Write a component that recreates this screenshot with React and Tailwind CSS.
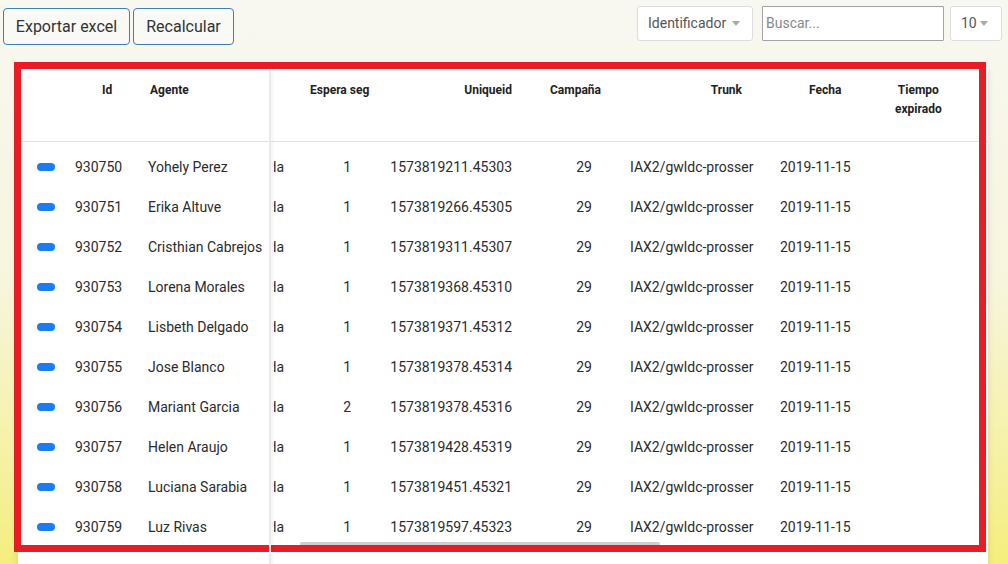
const rows = [
  { id: "930750", agente: "Yohely Perez", espera: 1, uniqueid: "1573819211.45303" },
  { id: "930751", agente: "Erika Altuve", espera: 1, uniqueid: "1573819266.45305" },
  { id: "930752", agente: "Cristhian Cabrejos", espera: 1, uniqueid: "1573819311.45307" },
  { id: "930753", agente: "Lorena Morales", espera: 1, uniqueid: "1573819368.45310" },
  { id: "930754", agente: "Lisbeth Delgado", espera: 1, uniqueid: "1573819371.45312" },
  { id: "930755", agente: "Jose Blanco", espera: 1, uniqueid: "1573819378.45314" },
  { id: "930756", agente: "Mariant Garcia", espera: 2, uniqueid: "1573819378.45316" },
  { id: "930757", agente: "Helen Araujo", espera: 1, uniqueid: "1573819428.45319" },
  { id: "930758", agente: "Luciana Sarabia", espera: 1, uniqueid: "1573819451.45321" },
  { id: "930759", agente: "Luz Rivas", espera: 1, uniqueid: "1573819597.45323" },
];

const Caret = () => (
  <span className="inline-block w-0 h-0 border-l-[4px] border-r-[4px] border-t-[5px] border-l-transparent border-r-transparent border-t-[#aaa]" />
);

const App = () => {
  return (
    <div
      className="relative w-[1008px] h-[564px] overflow-hidden bg-gradient-to-b from-[#f8f8f2] via-[#f7f5dc] to-[#f5ee7c]"
      style={{ fontFamily: "Roboto, 'Liberation Sans', sans-serif" }}
    >
      {/* toolbar */}
      <div className="flex justify-between items-start h-[62px]">
        <div className="flex gap-[3px] pl-[3px] pt-[8px]">
          <button className="h-[37px] w-[127px] border border-[#3f7fb4] rounded-[4px] bg-[#f9faf6] text-[16px] text-[#333]">
            Exportar excel
          </button>
          <button className="h-[37px] w-[101px] border border-[#3f7fb4] rounded-[4px] bg-[#f9faf6] text-[16px] text-[#333]">
            Recalcular
          </button>
        </div>
        <div className="flex items-center pt-[6px] pr-[6px]">
          <div className="h-[35px] w-[116px] flex items-center justify-between pl-[10px] pr-[12px] bg-white border border-[#ddd] rounded-[3px] text-[14px] text-[#555]">
            Identificador
            <Caret />
          </div>
          <div className="ml-[9px] h-[35px] w-[182px] flex items-center pl-[3px] bg-white border border-[#a3a3a3] rounded-[1px] text-[14px] text-[#888]">
            Buscar...
          </div>
          <div className="ml-[6px] h-[35px] w-[52px] flex items-center justify-between pl-[10px] pr-[13px] bg-white border border-[#ddd] rounded-[3px] text-[14px] text-[#555]">
            10
            <Caret />
          </div>
        </div>
      </div>

      {/* card */}
      <div className="ml-[18px] mt-[5px] w-[970px] h-[520px] bg-white shadow-[0_0_6px_rgba(0,0,0,0.12)] pt-[3px] relative">
        {/* sticky divider */}
        <div className="absolute left-[251px] top-[3px] bottom-[20px] w-[2px] bg-[#eaeaea] shadow-[2px_0_3px_rgba(0,0,0,0.06)] z-10" />

        {/* header */}
        <div className="flex h-[72px] border-b border-[#e3e3e3] text-[12px] font-bold text-[#222] leading-[19px] pt-[11px]">
          <div className="w-[47px]" />
          <div className="w-[75px] pl-[37px]">Id</div>
          <div className="w-[134px] pl-[10px]">Agente</div>
          <div className="w-[26px]" />
          <div className="w-[80px] pl-[10px]">Espera seg</div>
          <div className="w-[142px] pr-[10px] text-right">Uniqueid</div>
          <div className="w-[90px] pl-[28px]">Campaña</div>
          <div className="w-[153px] pr-[23px] text-right">Trunk</div>
          <div className="w-[105px] pl-[44px]">Fecha</div>
          <div className="pl-[25px]">
            <div className="text-center">
              Tiempo
              <br />
              expirado
            </div>
          </div>
        </div>

        {/* rows */}
        <div className="pt-[5px] text-[14px] text-[#2b2b2b]">
          {rows.map((r) => (
            <div key={r.id} className="flex items-center h-[40px]">
              <div className="w-[47px] pl-[19px]">
                <div className="w-[18px] h-[8px] rounded-full bg-[#1a7cf6]" />
              </div>
              <div className="w-[75px] pl-[10px]">{r.id}</div>
              <div className="w-[134px] pl-[8px] pr-[4px] whitespace-nowrap overflow-hidden">{r.agente}</div>
              <div className="w-[26px] flex justify-end pr-[16px] overflow-hidden whitespace-nowrap">
                <span>Atendida</span>
              </div>
              <div className="w-[80px] pr-[29px] text-right">{r.espera}</div>
              <div className="w-[142px] pr-[10px] text-right">{r.uniqueid}</div>
              <div className="w-[90px] pr-[20px] text-right">29</div>
              <div className="w-[153px] pl-[18px] whitespace-nowrap">IAX2/gwldc-prosser</div>
              <div className="w-[105px] pl-[15px]">2019-11-15</div>
            </div>
          ))}
        </div>

        {/* horizontal scrollbar */}
        <div className="-mt-[5px] ml-[282px] w-[360px] h-[4px] rounded-full bg-[#cfcfcf]" />
      </div>

      {/* red highlight annotation */}
      <div className="absolute left-[14px] top-[62px] w-[972px] h-[490px] border-[7px] border-[#e81c24] pointer-events-none" />
    </div>
  );
};

export default App;
